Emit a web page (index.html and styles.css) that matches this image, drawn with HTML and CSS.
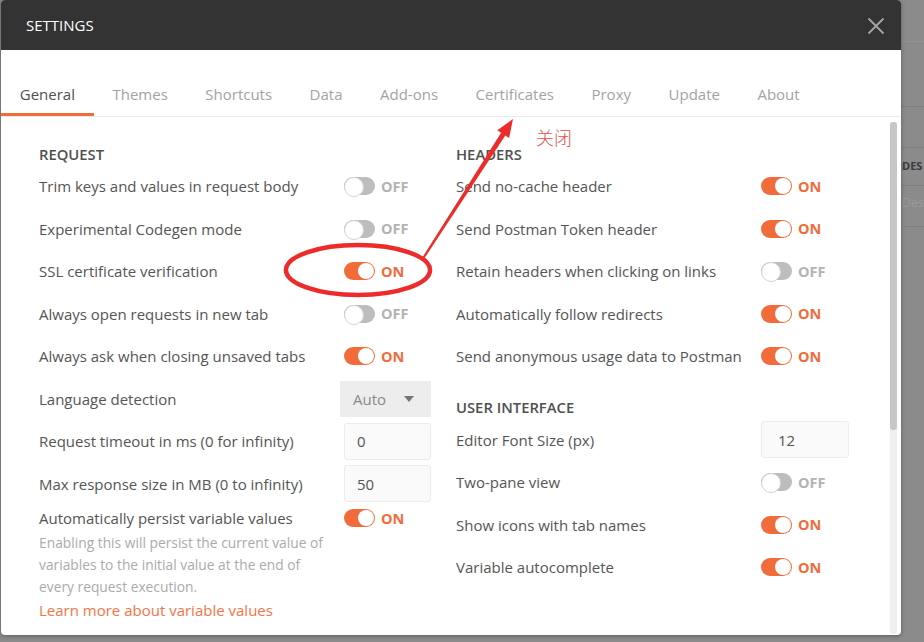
FILE: index.html
```html
<!DOCTYPE html>
<html>
<head>
<meta charset="utf-8">
<link rel="stylesheet" href="styles.css">
</head>
<body>
<div class="backdrop">
  <div class="bg-panel">
    <div class="bg-line l1"></div>
    <div class="bg-line l2"></div>
    <div class="bg-line l3"></div>
    <div class="bg-desc">DES</div>
    <div class="bg-line l4"></div>
    <div class="bg-ph">Des</div>
    <div class="bg-line l5"></div>
  </div>
</div>

<div class="modal">
  <div class="modal-header">
    <span class="modal-title">SETTINGS</span>
    <svg class="close" width="18" height="18" viewBox="0 0 18 18"><path d="M1.5 1.5 L16.5 16.5 M16.5 1.5 L1.5 16.5" stroke="#a6a6a6" stroke-width="1.8" fill="none"/></svg>
  </div>
  <div class="tabs">
    <div class="tab active">General</div>
    <div class="tab">Themes</div>
    <div class="tab">Shortcuts</div>
    <div class="tab">Data</div>
    <div class="tab">Add-ons</div>
    <div class="tab">Certificates</div>
    <div class="tab">Proxy</div>
    <div class="tab">Update</div>
    <div class="tab">About</div>
  </div>
  <div class="modal-body">
    <div class="columns">
      <div class="col">
        <div class="section-title">REQUEST</div>
        <div class="row"><span class="label">Trim keys and values in request body</span><span class="ctrl"><span class="toggle off"></span><span class="state off">OFF</span></span></div>
        <div class="row"><span class="label">Experimental Codegen mode</span><span class="ctrl"><span class="toggle off"></span><span class="state off">OFF</span></span></div>
        <div class="row"><span class="label">SSL certificate verification</span><span class="ctrl"><span class="toggle on"></span><span class="state on">ON</span></span></div>
        <div class="row"><span class="label">Always open requests in new tab</span><span class="ctrl"><span class="toggle off"></span><span class="state off">OFF</span></span></div>
        <div class="row"><span class="label">Always ask when closing unsaved tabs</span><span class="ctrl"><span class="toggle on"></span><span class="state on">ON</span></span></div>
        <div class="row"><span class="label">Language detection</span><span class="ctrl"><span class="dropdown"><span>Auto</span><span class="caret"></span></span></span></div>
        <div class="row"><span class="label">Request timeout in ms (0 for infinity)</span><span class="ctrl"><span class="input">0</span></span></div>
        <div class="row"><span class="label">Max response size in MB (0 to infinity)</span><span class="ctrl"><span class="input">50</span></span></div>
        <div class="persist">
          <div class="persist-top"><span class="label">Automatically persist variable values</span><span class="ctrl"><span class="toggle on"></span><span class="state on">ON</span></span></div>
          <div class="desc">Enabling this will persist the current value of variables to the initial value at the end of every request execution.</div>
          <div class="link">Learn more about variable values</div>
        </div>
      </div>
      <div class="col">
        <div class="section-title">HEADERS</div>
        <div class="row"><span class="label">Send no-cache header</span><span class="ctrl"><span class="toggle on"></span><span class="state on">ON</span></span></div>
        <div class="row"><span class="label">Send Postman Token header</span><span class="ctrl"><span class="toggle on"></span><span class="state on">ON</span></span></div>
        <div class="row"><span class="label">Retain headers when clicking on links</span><span class="ctrl"><span class="toggle off"></span><span class="state off">OFF</span></span></div>
        <div class="row"><span class="label">Automatically follow redirects</span><span class="ctrl"><span class="toggle on"></span><span class="state on">ON</span></span></div>
        <div class="row"><span class="label">Send anonymous usage data to Postman</span><span class="ctrl"><span class="toggle on"></span><span class="state on">ON</span></span></div>
        <div class="section-title ui">USER INTERFACE</div>
        <div class="row"><span class="label">Editor Font Size (px)</span><span class="ctrl"><span class="input wide">12</span></span></div>
        <div class="row"><span class="label">Two-pane view</span><span class="ctrl"><span class="toggle off"></span><span class="state off">OFF</span></span></div>
        <div class="row"><span class="label">Show icons with tab names</span><span class="ctrl"><span class="toggle on"></span><span class="state on">ON</span></span></div>
        <div class="row"><span class="label">Variable autocomplete</span><span class="ctrl"><span class="toggle on"></span><span class="state on">ON</span></span></div>
      </div>
    </div>
    <div class="scrollbar"><div class="thumb"></div></div>
  </div>
</div>

<svg class="annot" width="924" height="642" viewBox="0 0 924 642">
  <ellipse cx="358" cy="270" rx="72" ry="25" fill="none" stroke="#ee2b2b" stroke-width="4.5"/>
  <polygon points="422.3,257.6 501.1,132.7 497.3,130.3 513,119 509.1,137.9 505.3,135.5 424.2,258.6" fill="#ee2b2b"/>
</svg>
<div class="annot-text">关闭</div>
</body>
</html>
```

FILE: styles.css
```css
* { box-sizing: border-box; }
html, body { margin: 0; padding: 0; }
body {
  width: 924px;
  height: 642px;
  overflow: hidden;
  background: #8b8b8b;
  font-family: "Open Sans", "Noto Sans", sans-serif;
  position: relative;
}

.backdrop {
  position: absolute;
  inset: 0;
  background: #8b8b8b;
}
.bg-panel {
  position: absolute;
  left: 880px;
  top: 0;
  width: 44px;
  height: 642px;
  overflow: hidden;
}
.bg-line {
  position: absolute;
  left: 0;
  right: 0;
  height: 1px;
  background: #7e7e7e;
}
.bg-line.l1 { top: 41px; background: #939393; }
.bg-line.l2 { top: 106px; }
.bg-line.l3 { top: 147px; }
.bg-line.l4 { top: 185px; }
.bg-line.l5 { top: 226px; left: 24px; }
.bg-desc {
  position: absolute;
  left: 22px;
  top: 158px;
  font-size: 11px;
  font-weight: 700;
  color: #3a3a3a;
}
.bg-ph {
  position: absolute;
  left: 22px;
  top: 194px;
  font-size: 12.5px;
  color: #9a9a9a;
}

.modal {
  position: absolute;
  left: 1px;
  top: 0;
  width: 900px;
  height: 635px;
  background: #fff;
  border-radius: 4px;
  overflow: hidden;
  box-shadow: 0 1px 4px rgba(0,0,0,0.35);
  display: flex;
  flex-direction: column;
}

.modal-header {
  height: 50px;
  flex: none;
  background: #333333;
  display: flex;
  align-items: center;
  justify-content: space-between;
  padding: 0 16px 0 25px;
}
.modal-title {
  color: #fff;
  font-size: 15px;
}
.close { display: block; margin-top: 1px; }

.tabs {
  height: 67px;
  flex: none;
  display: flex;
  align-items: flex-end;
  border-bottom: 1px solid #ebebeb;
}
.tab {
  padding: 0 18.75px 9px;
  line-height: 20px;
  font-size: 15px;
  color: #a3a3a3;
  border-bottom: 3px solid transparent;
}
.tab.active {
  color: #505050;
  border-bottom-color: #f26b3a;
}

.modal-body {
  position: relative;
  flex: 1;
}
.columns {
  display: grid;
  grid-template-columns: 392px 393px;
  column-gap: 25px;
  padding: 26px 0 0 38px;
}
.section-title {
  height: 22px;
  line-height: 22px;
  font-size: 14.8px;
  font-weight: 600;
  color: #505050;
}
.section-title.ui { margin-top: 18.75px; }

.row {
  height: 42.5px;
  display: flex;
  align-items: center;
}
.label {
  width: 305px;
  flex: none;
  font-size: 15px;
  line-height: 22px;
  color: #555;
  white-space: nowrap;
}
.ctrl {
  display: flex;
  align-items: center;
}
.toggle {
  position: relative;
  width: 31px;
  height: 18px;
  border-radius: 9px;
  background: #f26b3a;
  flex: none;
}
.toggle::after {
  content: "";
  position: absolute;
  top: 1px;
  width: 16px;
  height: 16px;
  border-radius: 50%;
  background: #fff;
}
.toggle.on::after { right: 1px; }
.toggle.off { background: #bdbdbd; }
.toggle.off::after {
  left: 0;
  top: 0;
  width: 18px;
  height: 18px;
  border: 1px solid #d4d4d4;
}
.state {
  margin-left: 6px;
  font-size: 14.5px;
  font-weight: 700;
}
.state.on { color: #f26b3a; }
.state.off { color: #b3b3b3; }

.dropdown {
  margin-left: -4px;
  width: 91px;
  height: 36px;
  background: #ededed;
  display: flex;
  align-items: center;
  justify-content: space-between;
  padding: 0 17px 0 13px;
  font-size: 15px;
  color: #8a8a8a;
}
.caret {
  width: 0;
  height: 0;
  border-left: 5px solid transparent;
  border-right: 5px solid transparent;
  border-top: 6px solid #777;
}
.input {
  width: 87px;
  height: 37px;
  border: 1px solid #ececec;
  border-radius: 3px;
  background: #fafafa;
  display: flex;
  align-items: center;
  padding-left: 12px;
  font-size: 15px;
  color: #555;
}
.input.wide { width: 88px; padding-left: 16px; }

.persist { padding-top: 2px; }
.persist-top {
  display: flex;
  align-items: center;
}
.desc {
  width: 290px;
  margin-top: 3px;
  font-size: 13.8px;
  line-height: 22px;
  color: #ababab;
}
.link {
  margin-top: 1px;
  font-size: 15px;
  line-height: 22px;
  color: #f47447;
}

.scrollbar {
  position: absolute;
  top: 5px;
  left: 889px;
  width: 7px;
  bottom: 1px;
  background: #efefef;
  border-radius: 3px;
}
.thumb {
  height: 308px;
  background: #c6c6c6;
  border-radius: 3px;
}

.annot {
  position: absolute;
  left: 0;
  top: 0;
  pointer-events: none;
}
.annot-text {
  position: absolute;
  left: 536px;
  top: 124px;
  font-family: "Noto Sans CJK SC", sans-serif;
  font-weight: 300;
  font-size: 18px;
  line-height: 26px;
  color: #f04a4a;
}
```
